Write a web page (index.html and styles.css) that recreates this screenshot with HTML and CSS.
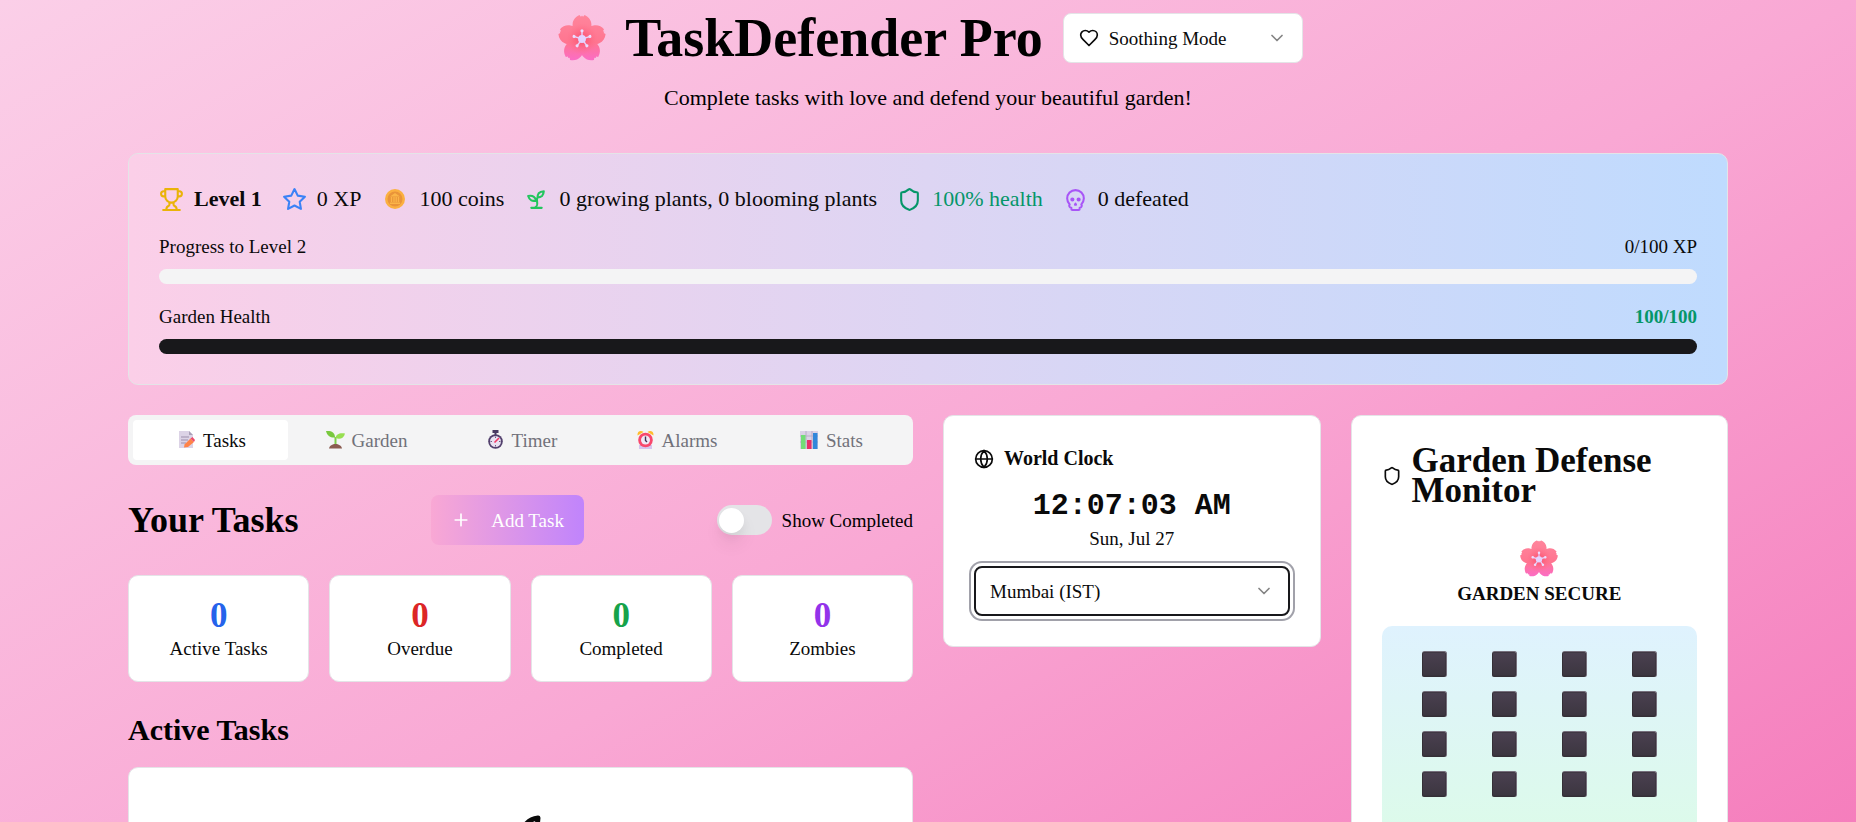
FILE: index.html
```html
<!DOCTYPE html>
<html lang="en">
<head>
<meta charset="utf-8">
<meta name="viewport" content="width=device-width, initial-scale=1">
<title>TaskDefender Pro</title>
<link rel="stylesheet" href="styles.css">
</head>
<body>
<svg class="defs" width="0" height="0" aria-hidden="true">
  <defs>
    <linearGradient id="petalFill" gradientUnits="userSpaceOnUse" x1="0" y1="2" x2="0" y2="46">
      <stop offset="0" stop-color="#ff859c"/><stop offset="0.6" stop-color="#ff7590"/><stop offset="1" stop-color="#fb6cc8"/>
    </linearGradient>
    <radialGradient id="petalGlow" gradientUnits="userSpaceOnUse" cx="24" cy="25" r="15">
      <stop offset="0" stop-color="#f84868"/><stop offset="1" stop-color="#ff6d88" stop-opacity="0"/>
    </radialGradient>
    <linearGradient id="blockFill" x1="0" y1="0" x2="0" y2="1">
      <stop offset="0" stop-color="#4a4050"/><stop offset="1" stop-color="#3c3640"/>
    </linearGradient>
    <path id="petal" d="M24 26C18 22 14.500 17 15 10.500C15.300 6.500 18 3.500 21.500 2L23 3.500L24 2.500L25 3.500L26.500 2C30 3.500 32.700 6.500 33 10.500C33.500 17 30 22 24 26Z"/>
    <g id="stamen"><path d="M24 25V17.500" stroke="#e6d2fb" stroke-width="1.400"/><circle cx="24" cy="17" r="1.500" fill="#ecdcff"/></g>
    <clipPath id="flowerClip"><use href="#petal"/><use href="#petal" transform="rotate(72 24 25)"/><use href="#petal" transform="rotate(144 24 25)"/><use href="#petal" transform="rotate(216 24 25)"/><use href="#petal" transform="rotate(288 24 25)"/></clipPath>
    <symbol id="flower" viewBox="0 0 48 48">
      <g clip-path="url(#flowerClip)">
        <rect width="48" height="50" fill="url(#petalFill)"/>
        <circle cx="24" cy="25" r="15" fill="url(#petalGlow)"/>
      </g>
      <use href="#stamen"/><use href="#stamen" transform="rotate(72 24 25)"/><use href="#stamen" transform="rotate(144 24 25)"/><use href="#stamen" transform="rotate(216 24 25)"/><use href="#stamen" transform="rotate(288 24 25)"/>
      <circle cx="24" cy="25" r="3.800" fill="#e4d3ff"/>
    </symbol>
    <symbol id="block" viewBox="0 0 25 26">
      <rect x="0" y="0" width="25" height="26" rx="2.500" fill="#77707d"/>
      <rect x="0" y="1" width="24" height="25" rx="2.500" fill="#342f36"/>
      <rect x="1" y="1.500" width="22.500" height="23" rx="1.500" fill="url(#blockFill)"/>
    </symbol>
    <symbol id="chevron" viewBox="0 0 24 24"><path d="m6 9 6 6 6-6"/></symbol>
    <symbol id="shield" viewBox="0 0 24 24"><path d="M20 13c0 5-3.500 7.500-7.660 8.950a1 1 0 0 1-.67-.01C7.500 20.500 4 18 4 13V6a1 1 0 0 1 1-1c2 0 4.500-1.200 6.240-2.720a1.170 1.170 0 0 1 1.520 0C14.510 3.810 17 5 19 5a1 1 0 0 1 1 1z"/></symbol>
  </defs>
</svg>

<div class="page">
  <header class="header">
    <div class="header-row">
      <h1 class="brand"><svg class="brand-flower"><use href="#flower"/></svg>TaskDefender Pro</h1>
      <div class="picker picker-mode">
        <svg class="icon icon-sm picker-lead" viewBox="0 0 24 24"><path d="M19 14c1.490-1.460 3-3.210 3-5.500A5.500 5.500 0 0 0 16.500 3c-1.760 0-3 .5-4.500 2-1.500-1.500-2.740-2-4.500-2A5.500 5.500 0 0 0 2 8.500c0 2.300 1.500 4.050 3 5.500l7 7Z"/></svg>
        <select class="select select-with-icon" aria-label="Mode"><option>Soothing Mode</option></select>
        <svg class="icon icon-sm picker-arrow"><use href="#chevron"/></svg>
      </div>
    </div>
    <p class="tagline">Complete tasks with love and defend your beautiful garden!</p>
  </header>

  <section class="card overview">
    <div class="stats">
      <div class="stat stat-level"><svg class="icon" viewBox="0 0 24 24"><path d="M6 9H4.500a2.500 2.500 0 0 1 0-5H6M18 9h1.500a2.500 2.500 0 0 0 0-5H18M4 22h16M10 14.660V17c0 .55-.47.980-.97 1.210C7.850 18.750 7 20.240 7 22M14 14.660V17c0 .55.470.980.970 1.210C16.150 18.750 17 20.240 17 22M18 2H6v7a6 6 0 0 0 12 0V2Z"/></svg><span>Level 1</span></div>
      <div class="stat stat-xp"><svg class="icon" viewBox="0 0 24 24"><path d="M12 2l3.090 6.260L22 9.270l-5 4.870 1.180 6.880L12 17.770l-6.180 3.250L7 14.140 2 9.270l6.910-1.010z"/></svg><span>0 XP</span></div>
      <div class="stat"><svg class="coin" viewBox="0 0 28 28"><circle cx="14" cy="14" r="10" fill="#fbb040"/><circle cx="14" cy="14" r="7.500" fill="#e9943a"/><path d="M9 11.500L14 8l5 3.500zM9 17.500h10v1.500H9z" fill="#fbb548"/><path d="M10.500 12v5M13 12v5M15.200 12v5M17.500 12v5" stroke="#fbb548" stroke-width="1.300"/></svg><span>100 coins</span></div>
      <div class="stat stat-plants"><svg class="icon" viewBox="0 0 24 24"><path d="M7 20h10M10 20c5.500-2.500.8-6.400 3-10M9.500 9.400c1.100.8 1.800 2.200 2.300 3.700-2 .4-3.500.4-4.800-.3-1.200-.6-2.300-1.900-3-4.200 2.800-.5 4.400 0 5.500.8zM14.100 6a7 7 0 0 0-1.100 4c1.900-.1 3.300-.6 4.300-1.400 1-1 1.600-2.300 1.700-4.600-2.700.1-4 1-4.900 2z"/></svg><span>0 growing plants, 0 blooming plants</span></div>
      <div class="stat stat-health"><svg class="icon"><use href="#shield"/></svg><span>100% health</span></div>
      <div class="stat stat-defeated"><svg class="icon" viewBox="0 0 24 24"><path d="m12.500 17-.5-1-.5 1h1zM15 22a1 1 0 0 0 1-1v-1a2 2 0 0 0 1.560-3.250 8 8 0 1 0-11.120 0A2 2 0 0 0 8 20v1a1 1 0 0 0 1 1z"/><circle cx="15" cy="12" r="1"/><circle cx="9" cy="12" r="1"/></svg><span>0 defeated</span></div>
    </div>
    <div class="meter">
      <div class="meter-head"><span>Progress to Level 2</span><span>0/100 XP</span></div>
      <div class="track" role="progressbar" aria-label="Progress to Level 2" aria-valuenow="0"><div class="fill" style="width:0%"></div></div>
    </div>
    <div class="meter">
      <div class="meter-head"><span>Garden Health</span><span class="meter-good">100/100</span></div>
      <div class="track" role="progressbar" aria-label="Garden Health" aria-valuenow="100"><div class="fill" style="width:100%"></div></div>
    </div>
  </section>

  <main class="columns">
    <div class="tasks">
      <div class="tabs" role="tablist">
        <button class="tab tab-active" role="tab" aria-selected="true"><svg class="emoji" viewBox="0 0 24 20"><path d="M4 1h10l4 4v13H4z" fill="#dcd3e6"/><path d="M14 1l4 4h-4z" fill="#aaa0b8"/><path d="M6 7h8M6 10h7M6 13h5" stroke="#9d8fac"/><path d="M9.500 14.500l6-6 3.500 3.500-6 5-4 .5z" fill="#ff8348"/><path d="M15.500 8.500l2-1.500 2.500 3-1 2z" fill="#ed4b6c"/></svg>Tasks</button>
        <button class="tab" role="tab"><svg class="emoji" viewBox="0 0 24 20"><path d="M5 18.500c1-6 12-6 13 0z" fill="#8a5b50"/><path d="M11.500 14V7" stroke="#7ed04b" stroke-width="2"/><path d="M11 7.500C7 8 3 6 2 1c5-.5 9 1 9 6.500z" fill="#79c83f"/><path d="M11.500 8C12 4 16 2.500 21 3.500 20 8 16 10 11.500 8z" fill="#98df52"/></svg>Garden</button>
        <button class="tab" role="tab"><svg class="emoji" viewBox="0 0 24 20"><path d="M8.500 0h6v3h-2v2h-2V3h-2z" fill="#493a63"/><circle cx="11.500" cy="11.500" r="7.300" fill="#52406d"/><circle cx="11.500" cy="11.500" r="5.500" fill="#e9e1f2"/><path d="M11.500 6.500v1.500M11.500 15v1.500M6.500 11.500H8M15 11.500h1.500" stroke="#6d5d86"/><path d="M10.500 12.500L15 8" stroke="#f33865" stroke-width="1.600"/></svg>Timer</button>
        <button class="tab" role="tab"><svg class="emoji" viewBox="0 0 24 20"><path d="M5 15h13v4H5z" fill="#d5c4ee"/><path d="M3.500 5.500C3 1 7 0 9.500 2zM19.500 5.500C20 1 16 0 13.500 2z" fill="#ffbc2c"/><circle cx="11.500" cy="10" r="7.300" fill="#f8476c"/><circle cx="11.500" cy="10" r="4.500" fill="#efe9f7"/><path d="M11.500 6.500v4l1.500 1.500" stroke="#443154" stroke-width="1.400" fill="none"/></svg>Alarms</button>
        <button class="tab" role="tab"><svg class="emoji" viewBox="0 0 24 20"><path d="M2 1h18v18H2z" fill="#dbd2e5"/><path d="M2 6h18M2 12h18M8 1v18M14 1v18" stroke="#b8acc6"/><path d="M3 5h4.500v14H3z" fill="#73dc76"/><path d="M9 10h4.500v9H9z" fill="#e82f68"/><path d="M15 3h4.500v16H15z" fill="#3187da"/></svg>Stats</button>
      </div>

      <div class="toolbar">
        <h2 class="heading">Your Tasks</h2>
        <button class="add"><svg class="icon icon-sm" viewBox="0 0 24 24"><path d="M5 12h14M12 5v14"/></svg>Add Task</button>
        <label class="toggle"><input class="switch" type="checkbox" role="switch">Show Completed</label>
      </div>

      <div class="counts">
        <div class="card count"><div class="count-number blue">0</div><div>Active Tasks</div></div>
        <div class="card count"><div class="count-number red">0</div><div>Overdue</div></div>
        <div class="card count"><div class="count-number green">0</div><div>Completed</div></div>
        <div class="card count"><div class="count-number purple">0</div><div>Zombies</div></div>
      </div>

      <section class="active">
        <h3 class="subheading">Active Tasks</h3>
        <div class="card empty"><svg class="empty-mark" viewBox="0 0 60 60"><path d="M31 22C32 12 36 4 47 3c0 6-2 12-8 15" fill="none" stroke="#0a0a0a" stroke-width="5" stroke-linejoin="round"/><path d="M39 17v38" stroke="#0a0a0a" stroke-width="5"/></svg></div>
      </section>
    </div>

    <section class="card clock">
      <h3 class="clock-title"><svg class="icon icon-sm" viewBox="0 0 24 24"><circle cx="12" cy="12" r="10"/><path d="M12 2a14.500 14.500 0 0 0 0 20 14.500 14.500 0 0 0 0-20M2 12h20"/></svg>World Clock</h3>
      <div class="clock-face">
        <time class="clock-time">12:07:03 AM</time>
        <div>Sun, Jul 27</div>
      </div>
      <div class="picker">
        <select class="select select-focused" aria-label="Time zone"><option>Mumbai (IST)</option></select>
        <svg class="icon icon-sm picker-arrow"><use href="#chevron"/></svg>
      </div>
    </section>

    <section class="card monitor">
      <h3 class="monitor-title"><svg class="icon icon-sm"><use href="#shield"/></svg><span>Garden Defense Monitor</span></h3>
      <div class="status"><svg class="status-flower"><use href="#flower"/></svg><strong class="status-text">GARDEN SECURE</strong></div>
      <div class="field">
        <svg><use href="#block"/></svg><svg><use href="#block"/></svg><svg><use href="#block"/></svg><svg><use href="#block"/></svg>
        <svg><use href="#block"/></svg><svg><use href="#block"/></svg><svg><use href="#block"/></svg><svg><use href="#block"/></svg>
        <svg><use href="#block"/></svg><svg><use href="#block"/></svg><svg><use href="#block"/></svg><svg><use href="#block"/></svg>
        <svg><use href="#block"/></svg><svg><use href="#block"/></svg><svg><use href="#block"/></svg><svg><use href="#block"/></svg>
      </div>
    </section>
  </main>
</div>
</body>
</html>
```
FILE: styles.css
```css
* { box-sizing: border-box; margin: 0; }

html { scrollbar-width: none; }

body {
  background: linear-gradient(to bottom right, #fbcfe8, #f9a8d4, #f472b6);
  color: #0a0a0a;
  font-family: "Liberation Serif", serif;
  font-size: 19px;
  line-height: 25px;
}

button, select { font: inherit; color: inherit; }

.defs { display: block; }

.page {
  max-width: 1600px;
  margin: 0 auto;
  padding-top: 13px;
  padding-bottom: 90px;
}

.header { margin-bottom: 40px; text-align: center; color: #000; }
.header-row { display: flex; justify-content: center; align-items: center; gap: 20px; margin-bottom: 20px; }
.brand { display: flex; align-items: center; gap: 18px; padding-left: 4px; font-size: 54px; line-height: 50px; }
.brand-flower { width: 50px; height: 50px; }
.tagline { font-size: 22px; line-height: 30px; }

.icon {
  width: 25px;
  height: 25px;
  flex: none;
  fill: none;
  stroke: currentColor;
  stroke-width: 2;
  stroke-linecap: round;
  stroke-linejoin: round;
}
.icon-sm { width: 20px; height: 20px; }

.picker { display: grid; align-items: center; text-align: left; color: #0a0a0a; }
.picker-mode { width: 240px; }
.picker > * { grid-area: 1 / 1; }
.picker-lead { z-index: 1; margin-left: 16px; pointer-events: none; }
.picker-arrow { z-index: 1; justify-self: end; margin-right: 16px; opacity: 0.5; pointer-events: none; }
.select {
  appearance: none;
  width: 100%;
  height: 50px;
  padding: 0 15px;
  border: 1px solid #e4e4e7;
  border-radius: 8px;
  background: #fff;
}
.select-with-icon { padding-left: 45px; }
.select-focused {
  border: 2px solid #18181b;
  padding-left: 14px;
  box-shadow: 0 0 0 3px #fff, 0 0 0 5px #a1a1aa;
}

.card { border: 1px solid #e4e4e7; border-radius: 10px; background: #fff; }

.overview {
  display: flex;
  flex-direction: column;
  gap: 20px;
  padding: 30px;
  margin-bottom: 30px;
  background: linear-gradient(to right, #fbcfe8, #bfdbfe);
}
.stats { display: flex; flex-wrap: wrap; gap: 20px; font-size: 22px; line-height: 30px; }
.stat { display: flex; align-items: center; gap: 10px; }
.stat-level { font-weight: bold; }
.stat-level .icon { color: #eab308; }
.stat-xp .icon { color: #3b82f6; }
.stat-plants .icon { color: #22c55e; }
.stat-health { color: #059669; }
.stat-defeated .icon { color: #a855f7; }
.coin { width: 28px; height: 28px; }

.meter { display: flex; flex-direction: column; gap: 10px; }
.meter-head { display: flex; justify-content: space-between; }
.meter-good { color: #059669; font-weight: bold; }
.track { height: 15px; border-radius: 8px; background: #f4f4f5; overflow: hidden; }
.fill { height: 100%; background: #18181b; }

.columns { display: grid; grid-template-columns: repeat(4, 1fr); gap: 30px; align-items: start; }

.tasks { grid-column: span 2; display: flex; flex-direction: column; gap: 30px; }
.tabs { display: grid; grid-template-columns: repeat(5, 1fr); padding: 5px; border-radius: 8px; background: #f4f4f5; }
.tab {
  display: flex;
  justify-content: center;
  align-items: center;
  gap: 4px;
  height: 40px;
  padding: 0;
  border: 0;
  border-radius: 4px;
  background: none;
  color: #71717a;
}
.tab-active { background: #fff; color: #0a0a0a; }
.emoji { width: 24px; height: 20px; }

.toolbar { display: flex; justify-content: space-between; align-items: center; color: #000; }
.heading { font-size: 36px; line-height: 40px; }
.add {
  display: flex;
  align-items: center;
  gap: 20px;
  height: 50px;
  padding: 0 20px;
  border: 0;
  border-radius: 8px;
  background: linear-gradient(to right, #f9a8d4, #c084fc);
  color: #fff;
}
.toggle { display: flex; align-items: center; gap: 10px; }
.switch {
  appearance: none;
  display: flex;
  align-items: center;
  width: 55px;
  height: 30px;
  margin: 0;
  padding: 2px;
  border-radius: 15px;
  background: #e4e4e7;
}
.switch::before {
  content: "";
  width: 25px;
  height: 25px;
  border-radius: 50%;
  background: #fff;
  box-shadow: 0 12px 18px rgba(0, 0, 0, 0.06), 0 5px 8px rgba(0, 0, 0, 0.04);
}

.counts { display: grid; grid-template-columns: repeat(4, 1fr); gap: 20px; }
.count { padding: 20px; text-align: center; }
.count-number { font-size: 35px; line-height: 40px; font-weight: bold; }
.blue { color: #2563eb; }
.red { color: #dc2626; }
.green { color: #16a34a; }
.purple { color: #9333ea; }

.active { display: flex; flex-direction: column; gap: 20px; }
.subheading { font-size: 30px; line-height: 35px; color: #000; }
.empty { padding: 47px 30px 80px; text-align: center; }
.empty-mark { width: 60px; height: 60px; }

.clock { display: flex; flex-direction: column; gap: 15px; padding: 30px; }
.clock-title { display: flex; align-items: center; gap: 10px; font-size: 20px; line-height: 25px; }
.clock-face { text-align: center; }
.clock-time {
  display: block;
  font-family: "Liberation Mono", monospace;
  font-size: 30px;
  line-height: 40px;
  font-weight: bold;
}

.monitor { padding: 30px 30px 80px; }
.monitor-title { display: flex; align-items: center; gap: 10px; margin-bottom: 30px; font-size: 35px; line-height: 30px; }
.status { display: flex; flex-direction: column; align-items: center; margin-bottom: 20px; }
.status-flower { width: 40px; height: 45px; }
.status-text { font-size: 19px; }
.field {
  display: grid;
  grid-template-columns: repeat(4, 1fr);
  grid-auto-rows: 35px;
  gap: 5px;
  padding: 20px 20px 60px;
  border-radius: 10px;
  background: linear-gradient(to bottom, #dff2fe, #dcfce7);
  place-items: center;
}
.field svg { width: 25px; height: 26px; }
```
